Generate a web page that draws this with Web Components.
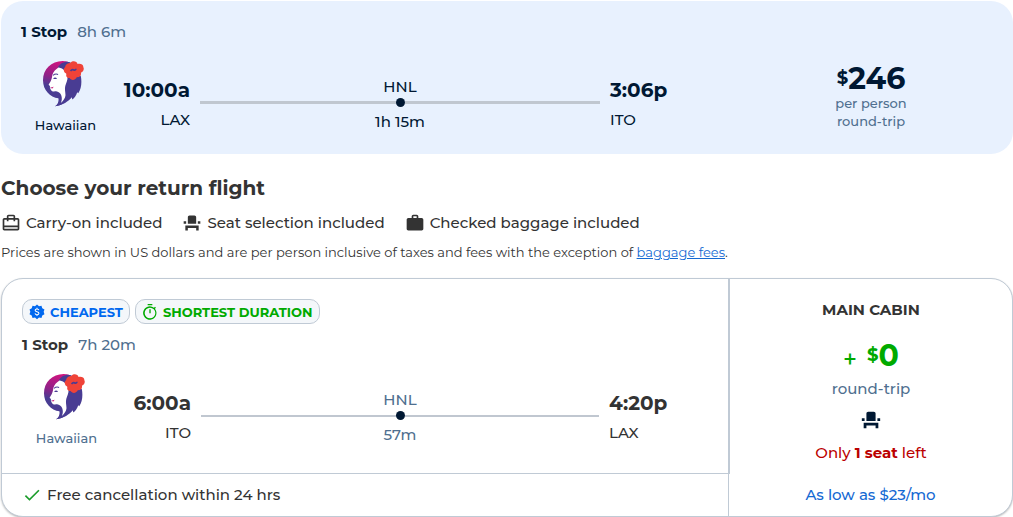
<!DOCTYPE html>
<html lang="en">
<head>
<meta charset="utf-8">
<meta name="viewport" content="width=device-width, initial-scale=1">
<title>Choose your return flight</title>
<style>
  :root {
    --navy: #001833;
    --text: #333;
    --muted: #4f6f8f;
    --blue: #0068ef;
    --green: #0a0;
    --red: #b00;
    --line: #c0cad5;
    --surface: #e8f1fe;
  }

  body {
    margin: 0;
    padding: 1px 0 0 1px;
    background: #fff;
    color: var(--text);
    font: 15px/20px Montserrat, Inter, "Open Sans", sans-serif;
    font-weight: 500;
  }
</style>
</head>
<body>
<results-page></results-page>

<script>
const ICONS = {
  carry: '<path d="M20 6h-3V4c0-1.1-.9-2-2-2H9c-1.1 0-2 .9-2 2v2H4c-1.1 0-2 .9-2 2v11c0 1.1.9 2 2 2h16c1.1 0 2-.9 2-2V8c0-1.1-.9-2-2-2zM9 4h6v2H9V4zm11 15H4v-2h16v2zm0-4H4V8h3v2h2V8h6v2h2V8h3v7z"/>',
  seat: '<path d="M4 18v3h3v-3h10v3h3v-6H4zm15-8h3v3h-3zM2 10h3v3H2zm15 3H7V5c0-1.1.9-2 2-2h6c1.1 0 2 .9 2 2v8z"/>',
  bag: '<path d="M20 6h-4V4c0-1.1-.9-2-2-2h-4c-1.1 0-2 .9-2 2v2H4c-1.1 0-2 .9-2 2v11c0 1.1.9 2 2 2h16c1.1 0 2-.9 2-2V8c0-1.1-.9-2-2-2zm-6 0h-4V4h4v2z"/>',
  timer: '<path d="M8.500 0h7v2h-7zM11 8h2v6h-2zM19.400 7.200l1.500-1.500-1.400-1.400L18 5.800A10 10 0 1 0 19.400 7.200zM12 21.500a8 8 0 1 1 0-16 8 8 0 0 1 0 16z"/>',
  check: '<path d="M9 16.200 4.800 12l-1.400 1.400L9 19 21 7l-1.400-1.400z"/>',
  deal: '<path d="M12 .8l3 2.400 3.700-.5 1.200 3.500 3.300 2-1.200 3.600 1.200 3.600-3.300 2-1.200 3.500-3.700-.5-3 2.400-3-2.400-3.700.5-1.200-3.500-3.300-2L2 11.800.8 8.200l3.300-2 1.200-3.500 3.700.5z"/><path fill="none" stroke="#fff" stroke-width="1.600" d="M14.800 9.200c-.3-1.200-1.400-1.700-2.800-1.700-1.600 0-2.800.7-2.800 2 0 2.900 5.700 1.500 5.700 4.500 0 1.400-1.200 2.100-2.900 2.100s-2.700-.7-3-1.900M12 5.600v2M12 16v2"/>'
};

class UiIcon extends HTMLElement {
  constructor() {
    super();
    this.attachShadow({ mode: "open" });
  }

  connectedCallback() {
    this.shadowRoot.innerHTML = `
      <style>
        :host {
          display: inline-block;
          flex: none;
          width: 20px;
          height: 20px;
        }

        svg {
          display: block;
          width: 100%;
          height: 100%;
          fill: currentColor;
        }
      </style>
      <svg viewBox="0 0 24 24" aria-hidden="true">${ICONS[this.getAttribute("name")] || ""}</svg>
    `;
  }
}

class AirlineLogo extends HTMLElement {
  constructor() {
    super();
    this.attachShadow({ mode: "open" });
  }

  connectedCallback() {
    this.shadowRoot.innerHTML = `
      <style>
        :host {
          display: block;
          width: 46px;
          height: 46px;
        }

        svg {
          display: block;
          width: 100%;
          height: 100%;
        }
      </style>
      <svg viewBox="0 0 137 137" role="img" aria-label="Hawaiian">
        <defs>
          <linearGradient id="shade" gradientUnits="userSpaceOnUse" x1="45" y1="0" x2="25" y2="95">
            <stop offset="0" stop-color="#d0147f"/>
            <stop offset="0.500" stop-color="#8f2288"/>
            <stop offset="0.800" stop-color="#493c93"/>
          </linearGradient>
        </defs>
        <path fill="url(#shade)" d="M74 2C33-7 0 20 0 57c0 30 21 50 46 54 2 10-2 18-10 24 20-3 32-11 34-24L74 2z"/>
        <path fill="#493c93" d="M44 20C50 6 67-1 81 4l32 42c3 19 1 37-8 50l-3-3c-3 10-8 17-15 22l-1-7c-10 12-27 24-50 27 9-5 13-13 11-23l20-78z"/>
        <path fill="#fff" d="M46 19C38 24 31 31 28 41c-1 8-2 13-6 21l-5 8c-1 2 3 3 4 5l-1 3 3 2-2 3 3 3c2 5 8 5 15 4 7 1 12 5 15 11 3 8 3 15-1 24 8-7 13-14 14-23 0-12-4-20 1-33 4-10 7-17 4-28-3-11-11-19-25-22z"/>
        <path fill="none" stroke="#493c93" stroke-width="3" d="M30 43c4-4 9-5 15-3"/>
        <path fill="#493c93" d="M30 52c4-4 8-4 12 0-4 2-8 2-12 0z"/>
        <path fill="#c81e78" d="M23 79l9-2-5 6z"/>
        <path fill="#ef4338" d="M82 5c7-7 19-4 21 4 7-3 18 1 17 9 4 7-1 15-7 17 2 9-5 14-12 13-4 10-17 11-22 3-8 0-12-7-9-13-9-4-11-14-4-20 1-9 9-12 16-13z"/>
        <path fill="none" stroke="#493c93" stroke-width="5" d="M82 30c3-4 7-5 10-3 4 1 6-1 6-4"/>
      </svg>
    `;
  }
}

class FlightLeg extends HTMLElement {
  constructor() {
    super();
    this.attachShadow({ mode: "open" });
  }

  connectedCallback() {
    this.shadowRoot.innerHTML = `
      <style>
        :host {
          display: block;
          --strong: var(--text);
          --soft: var(--muted);
          --track: 2px;
        }

        :host([selected]) {
          --strong: var(--navy);
          --soft: var(--navy);
          --track: 3px;
        }

        .stops {
          display: flex;
          gap: 10px;
          padding: 0 20px;
          color: var(--muted);
        }

        .stops b {
          color: var(--strong);
          font-weight: 700;
        }

        .leg {
          display: grid;
          grid-template-columns: 89px 70px minmax(0, 1fr) 119px;
          column-gap: 10px;
          margin-top: 19px;
          padding-left: 20px;
        }

        .airline {
          display: flex;
          flex-direction: column;
          align-items: center;
          gap: 9px;
          color: var(--soft);
          font-size: 13px;
          line-height: 18px;
        }

        .end {
          padding-top: 15px;
          color: var(--strong);
          white-space: nowrap;
        }

        .depart {
          display: flex;
          flex-direction: column;
          align-items: flex-end;
        }

        .time {
          margin-bottom: 6px;
          font-size: 20px;
          line-height: 28px;
          font-weight: 700;
        }

        .route {
          display: flex;
          flex-direction: column;
          align-items: center;
          padding-top: 16px;
          color: var(--soft);
        }

        .track {
          display: flex;
          align-items: center;
          align-self: stretch;
          margin: 1px 0 5px;
        }

        .track::before,
        .track::after {
          content: "";
          flex: 1;
          height: var(--track);
          background: #c0c7d0;
        }

        .dot {
          width: 9px;
          height: 9px;
          border-radius: 50%;
          background: var(--navy);
        }
      </style>
      <div class="stops"><b>1 Stop</b><slot name="duration"></slot></div>
      <div class="leg">
        <div class="airline"><airline-logo></airline-logo><slot name="airline"></slot></div>
        <div class="end depart">
          <div class="time"><slot name="depart-time"></slot></div>
          <slot name="from"></slot>
        </div>
        <div class="route">
          <slot name="via"></slot>
          <div class="track"><span class="dot"></span></div>
          <slot name="layover"></slot>
        </div>
        <div class="end">
          <div class="time"><slot name="arrive-time"></slot></div>
          <slot name="to"></slot>
        </div>
      </div>
    `;
  }
}

class PriceTag extends HTMLElement {
  constructor() {
    super();
    this.attachShadow({ mode: "open" });
  }

  connectedCallback() {
    this.shadowRoot.innerHTML = `
      <style>
        :host {
          display: flex;
          justify-content: center;
          font-size: 30px;
          line-height: 30px;
          font-weight: 700;
        }

        .currency {
          font-size: 18px;
          line-height: 28px;
        }

        .plus {
          margin-right: 10px;
          font-size: 24px;
          line-height: 38px;
          font-weight: 500;
        }
      </style>
      ${this.hasAttribute("extra") ? '<span class="plus">+</span>' : ""}
      <span class="currency">$</span><slot></slot>
    `;
  }
}

class FlightBadge extends HTMLElement {
  constructor() {
    super();
    this.attachShadow({ mode: "open" });
  }

  connectedCallback() {
    this.shadowRoot.innerHTML = `
      <style>
        :host {
          display: flex;
          align-items: center;
          gap: 5px;
          box-sizing: border-box;
          height: 25px;
          padding: 0 6px;
          border: 1px solid var(--line);
          border-radius: 10px;
          background: #f4f7fa;
          color: var(--blue);
          font-size: 13px;
          font-weight: 700;
          white-space: nowrap;
        }

        :host([tone="green"]) {
          color: var(--green);
        }

        ui-icon {
          width: 16px;
          height: 16px;
        }
      </style>
      <ui-icon name="${this.getAttribute("icon")}"></ui-icon><slot></slot>
    `;
  }
}

class SelectedFlight extends HTMLElement {
  constructor() {
    super();
    this.attachShadow({ mode: "open" });
  }

  connectedCallback() {
    this.shadowRoot.innerHTML = `
      <style>
        :host {
          display: grid;
          grid-template-columns: minmax(0, 1fr) 284px;
          padding: 21px 0 20px;
          border-radius: 22px;
          background: var(--surface);
        }

        .price {
          padding-top: 42px;
          color: var(--muted);
          font-size: 13px;
          line-height: 18px;
          text-align: center;
        }

        price-tag {
          color: var(--navy);
        }
      </style>
      <slot></slot>
      <div class="price">
        <price-tag>246</price-tag>
        <div>per person</div>
        <div>round-trip</div>
      </div>
    `;
  }
}

class ReturnOption extends HTMLElement {
  constructor() {
    super();
    this.attachShadow({ mode: "open" });
  }

  connectedCallback() {
    this.shadowRoot.innerHTML = `
      <style>
        :host {
          display: grid;
          grid-template-columns: minmax(0, 1fr) 284px;
          border: 1px solid var(--line);
          border-radius: 22px;
          background: #fff;
          box-shadow: 0 1px 2px #0004;
        }

        .flight {
          padding: 20px 0 26px;
          border-bottom: 1px solid var(--line);
        }

        .badges {
          display: flex;
          gap: 5px;
          margin-bottom: 11px;
          padding: 0 20px;
        }

        .fare {
          padding-top: 21px;
          border-left: 2px solid var(--line);
          text-align: center;
        }

        h3 {
          margin: 0 0 21px;
          font-size: 15px;
          line-height: 20px;
          font-weight: 700;
        }

        price-tag {
          color: var(--green);
        }

        .unit {
          color: var(--muted);
        }

        .fare ui-icon {
          display: block;
          width: 22px;
          height: 22px;
          margin: 10px auto 12px;
          color: var(--navy);
        }

        .left {
          color: var(--red);
        }

        .left b {
          font-weight: 700;
        }

        .perk {
          display: flex;
          align-items: center;
          gap: 5px;
          min-height: 42px;
          padding-left: 20px;
        }

        .perk ui-icon {
          color: #1a9c2a;
        }

        .finance {
          display: flex;
          align-items: center;
          justify-content: center;
          border-left: 1px solid var(--line);
        }

        .finance a {
          color: #1469d3;
          text-decoration: none;
        }
      </style>
      <div class="flight">
        <div class="badges">
          <flight-badge icon="deal">CHEAPEST</flight-badge>
          <flight-badge icon="timer" tone="green">SHORTEST DURATION</flight-badge>
        </div>
        <slot></slot>
      </div>
      <div class="fare">
        <h3>MAIN CABIN</h3>
        <price-tag extra>0</price-tag>
        <div class="unit">round-trip</div>
        <ui-icon name="seat"></ui-icon>
        <div class="left">Only <b>1 seat</b> left</div>
      </div>
      <div class="perk"><ui-icon name="check"></ui-icon>Free cancellation within 24 hrs</div>
      <div class="finance"><a href="#financing">As low as $23/mo</a></div>
    `;
  }
}

class ResultsPage extends HTMLElement {
  constructor() {
    super();
    this.attachShadow({ mode: "open" });
  }

  connectedCallback() {
    this.shadowRoot.innerHTML = `
      <style>
        :host {
          display: block;
        }

        h2 {
          margin: 20px 0 11px;
          font-size: 20px;
          line-height: 28px;
          font-weight: 700;
        }

        .included {
          display: flex;
          flex-wrap: wrap;
          column-gap: 20px;
          margin: 0 0 10px;
          padding: 0;
          list-style: none;
        }

        .included li {
          display: flex;
          align-items: center;
          gap: 5px;
        }

        .note {
          margin: 0 0 17px;
          font-size: 13px;
          line-height: 18px;
          font-weight: 400;
        }

        .note a {
          color: #1469d3;
        }
      </style>
      <selected-flight>
        <flight-leg selected>
          <span slot="duration">8h 6m</span>
          <span slot="airline">Hawaiian</span>
          <span slot="depart-time">10:00a</span>
          <span slot="from">LAX</span>
          <span slot="via">HNL</span>
          <span slot="layover">1h 15m</span>
          <span slot="arrive-time">3:06p</span>
          <span slot="to">ITO</span>
        </flight-leg>
      </selected-flight>
      <h2>Choose your return flight</h2>
      <ul class="included">
        <li><ui-icon name="carry"></ui-icon>Carry-on included</li>
        <li><ui-icon name="seat"></ui-icon>Seat selection included</li>
        <li><ui-icon name="bag"></ui-icon>Checked baggage included</li>
      </ul>
      <p class="note">Prices are shown in US dollars and are per person inclusive of taxes and fees with the exception of <a href="#baggage">baggage fees</a>.</p>
      <return-option>
        <flight-leg>
          <span slot="duration">7h 20m</span>
          <span slot="airline">Hawaiian</span>
          <span slot="depart-time">6:00a</span>
          <span slot="from">ITO</span>
          <span slot="via">HNL</span>
          <span slot="layover">57m</span>
          <span slot="arrive-time">4:20p</span>
          <span slot="to">LAX</span>
        </flight-leg>
      </return-option>
    `;
  }
}

customElements.define("ui-icon", UiIcon);
customElements.define("airline-logo", AirlineLogo);
customElements.define("flight-leg", FlightLeg);
customElements.define("price-tag", PriceTag);
customElements.define("flight-badge", FlightBadge);
customElements.define("selected-flight", SelectedFlight);
customElements.define("return-option", ReturnOption);
customElements.define("results-page", ResultsPage);
</script>
</body>
</html>
